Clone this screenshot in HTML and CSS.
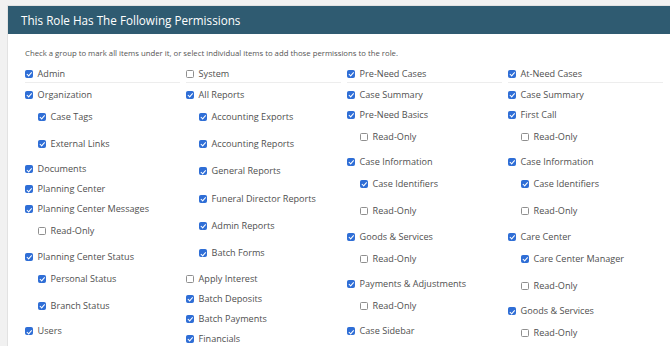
FILE: index.html
```html
<!DOCTYPE html>
<html lang="en">
<head>
<meta charset="utf-8">
<title>Role Permissions</title>
<link rel="stylesheet" href="styles.css">
</head>
<body>
<section class="panel">
  <header class="panel-head">
    <h2 class="panel-title">This Role Has The Following Permissions</h2>
  </header>
  <div class="panel-body">
    <p class="hint">Check a group to mark all items under it, or select individual items to add those permissions to the role.</p>
    <div class="cols">
      <ul class="col">
        <li class="item top"><span class="row"><span class="cb on"></span>Admin</span></li>
        <li class="item"><span class="row"><span class="cb on"></span>Organization</span>
          <ul class="sub">
            <li class="sub-item"><span class="row"><span class="cb on"></span>Case Tags</span></li>
            <li class="sub-item"><span class="row"><span class="cb on"></span>External Links</span></li>
          </ul>
        </li>
        <li class="item"><span class="row"><span class="cb on"></span>Documents</span></li>
        <li class="item"><span class="row"><span class="cb on"></span>Planning Center</span></li>
        <li class="item"><span class="row"><span class="cb on"></span>Planning Center Messages</span>
          <ul class="sub">
            <li class="sub-item"><span class="row"><span class="cb"></span>Read-Only</span></li>
          </ul>
        </li>
        <li class="item"><span class="row"><span class="cb on"></span>Planning Center Status</span>
          <ul class="sub">
            <li class="sub-item"><span class="row"><span class="cb on"></span>Personal Status</span></li>
            <li class="sub-item"><span class="row"><span class="cb on"></span>Branch Status</span></li>
          </ul>
        </li>
        <li class="item"><span class="row"><span class="cb on"></span>Users</span></li>
      </ul>
      <ul class="col">
        <li class="item top"><span class="row"><span class="cb"></span>System</span></li>
        <li class="item"><span class="row"><span class="cb on"></span>All Reports</span>
          <ul class="sub">
            <li class="sub-item"><span class="row"><span class="cb on"></span>Accounting Exports</span></li>
            <li class="sub-item"><span class="row"><span class="cb on"></span>Accounting Reports</span></li>
            <li class="sub-item"><span class="row"><span class="cb on"></span>General Reports</span></li>
            <li class="sub-item"><span class="row"><span class="cb on"></span>Funeral Director Reports</span></li>
            <li class="sub-item"><span class="row"><span class="cb on"></span>Admin Reports</span></li>
            <li class="sub-item"><span class="row"><span class="cb on"></span>Batch Forms</span></li>
          </ul>
        </li>
        <li class="item"><span class="row"><span class="cb"></span>Apply Interest</span></li>
        <li class="item"><span class="row"><span class="cb on"></span>Batch Deposits</span></li>
        <li class="item"><span class="row"><span class="cb on"></span>Batch Payments</span></li>
        <li class="item"><span class="row"><span class="cb on"></span>Financials</span></li>
      </ul>
      <ul class="col">
        <li class="item top"><span class="row"><span class="cb on"></span>Pre-Need Cases</span></li>
        <li class="item"><span class="row"><span class="cb on"></span>Case Summary</span></li>
        <li class="item"><span class="row"><span class="cb on"></span>Pre-Need Basics</span>
          <ul class="sub">
            <li class="sub-item"><span class="row"><span class="cb"></span>Read-Only</span></li>
          </ul>
        </li>
        <li class="item"><span class="row"><span class="cb on"></span>Case Information</span>
          <ul class="sub">
            <li class="sub-item"><span class="row"><span class="cb on"></span>Case Identifiers</span></li>
            <li class="sub-item"><span class="row"><span class="cb"></span>Read-Only</span></li>
          </ul>
        </li>
        <li class="item"><span class="row"><span class="cb on"></span>Goods &amp; Services</span>
          <ul class="sub">
            <li class="sub-item"><span class="row"><span class="cb"></span>Read-Only</span></li>
          </ul>
        </li>
        <li class="item"><span class="row"><span class="cb on"></span>Payments &amp; Adjustments</span>
          <ul class="sub">
            <li class="sub-item"><span class="row"><span class="cb"></span>Read-Only</span></li>
          </ul>
        </li>
        <li class="item"><span class="row"><span class="cb on"></span>Case Sidebar</span></li>
      </ul>
      <ul class="col">
        <li class="item top"><span class="row"><span class="cb on"></span>At-Need Cases</span></li>
        <li class="item"><span class="row"><span class="cb on"></span>Case Summary</span></li>
        <li class="item"><span class="row"><span class="cb on"></span>First Call</span>
          <ul class="sub">
            <li class="sub-item"><span class="row"><span class="cb"></span>Read-Only</span></li>
          </ul>
        </li>
        <li class="item"><span class="row"><span class="cb on"></span>Case Information</span>
          <ul class="sub">
            <li class="sub-item"><span class="row"><span class="cb on"></span>Case Identifiers</span></li>
            <li class="sub-item"><span class="row"><span class="cb"></span>Read-Only</span></li>
          </ul>
        </li>
        <li class="item"><span class="row"><span class="cb on"></span>Care Center</span>
          <ul class="sub">
            <li class="sub-item"><span class="row"><span class="cb on"></span>Care Center Manager</span></li>
            <li class="sub-item"><span class="row"><span class="cb"></span>Read-Only</span></li>
          </ul>
        </li>
        <li class="item"><span class="row"><span class="cb on"></span>Goods &amp; Services</span>
          <ul class="sub">
            <li class="sub-item"><span class="row"><span class="cb"></span>Read-Only</span></li>
          </ul>
        </li>
      </ul>
    </div>
  </div>
</section>
</body>
</html>
```
FILE: styles.css
```css
html, body {
  margin: 0;
  padding: 0;
}
body {
  background: #f1f1f1;
  font-family: "Open Sans", "DejaVu Sans", sans-serif;
  color: #4f4f4f;
  overflow: hidden;
  height: 346px;
  padding: 6px 0 0 8px;
  box-sizing: border-box;
}
.panel {
  background: #ffffff;
  box-shadow: 0 0 0 1px #e2e2e2;
  height: 340px;
  overflow: hidden;
}
.panel-head {
  background: #2f5b71;
  height: 28px;
  padding-left: 13px;
}
.panel-title {
  margin: 0;
  font-weight: 400;
  font-size: 11.7px;
  line-height: 29px;
  color: #ffffff;
}
.panel-body {
  padding: 12px 0 0 17px;
}
.hint {
  margin: 0;
  font-size: 7.75px;
  line-height: 14px;
  color: #555555;
}
.cols {
  margin-top: 4px;
  display: grid;
  grid-template-columns: repeat(4, 155px);
  column-gap: 6px;
  align-items: start;
}
.col, .sub {
  list-style: none;
  margin: 0;
  padding: 0;
}
.sub {
  padding-left: 13px;
}
.row {
  display: flex;
  align-items: center;
  height: 20px;
  font-size: 9.1px;
  white-space: nowrap;
}
.item.top > .row {
  height: 17px;
  border-bottom: 1px solid #ededed;
  margin-bottom: 1px;
  margin-top: 1px;
}
.sub-item {
  height: 27.4px;
  padding-top: 2px;
  box-sizing: border-box;
}
.cb {
  position: relative;
  flex: none;
  width: 8px;
  height: 8px;
  margin: 1px 4.6px 0 0;
  box-sizing: border-box;
  border: 1px solid #8f8f8f;
  border-radius: 1.5px;
  background: #ffffff;
}
.cb.on {
  background: #2f6ed6;
  border-color: #2f6ed6;
}
.cb.on::after {
  content: "";
  position: absolute;
  left: 2.1px;
  top: 0.4px;
  width: 1.6px;
  height: 3.6px;
  border: solid #ffffff;
  border-width: 0 1.2px 1.2px 0;
  transform: rotate(42deg);
}
```
